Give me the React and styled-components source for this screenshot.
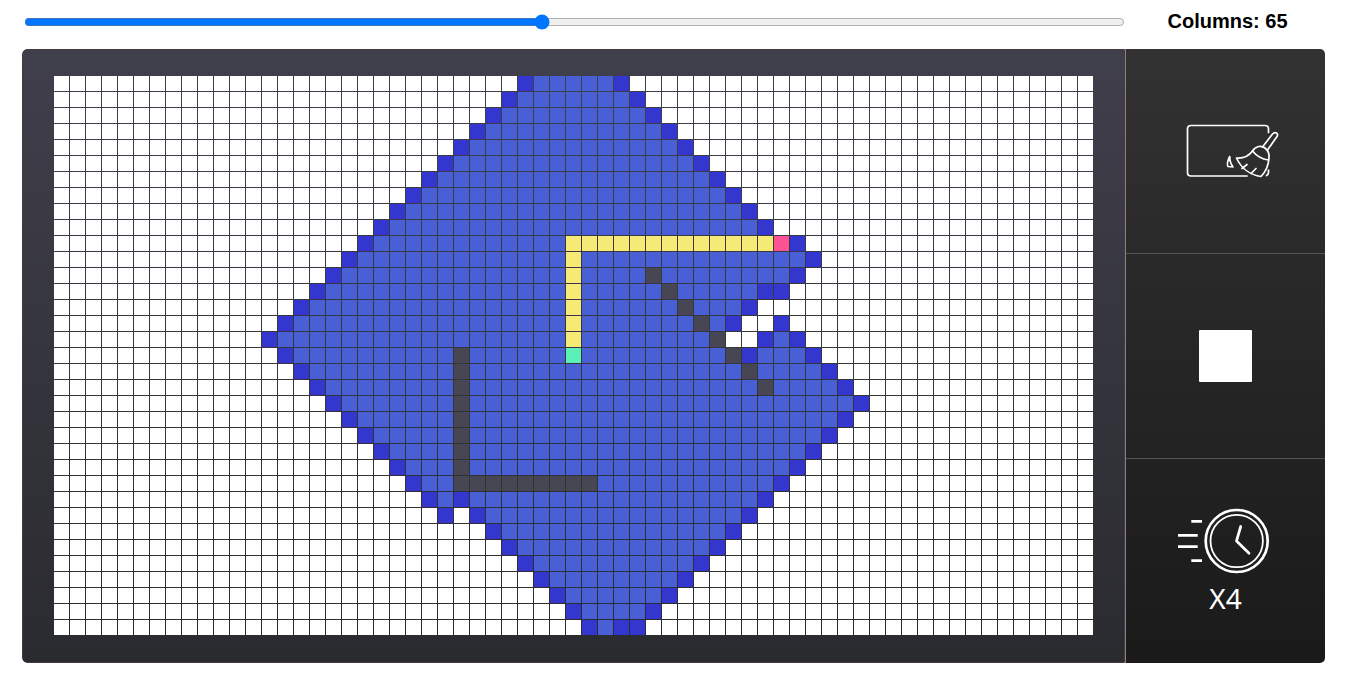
import React, { useState } from "react";
import styled, { createGlobalStyle } from "styled-components";

const GlobalStyle = createGlobalStyle`
  *, *::before, *::after { box-sizing: border-box; }
  body { margin: 0; background: #fff; font-family: "Liberation Sans", Arial, sans-serif; }
`;

const COLORS = {
  empty: "#ffffff",
  visited: "#485fd6",
  frontier: "#3336cf",
  wall: "#474754",
  path: "#f6ea76",
  start: "#5bf0b5",
  goal: "#fd5395",
};

const COLUMNS = 65;
const ROWS = 35;

const Page = styled.main`
  display: flex;
  flex-direction: column;
  padding: 0 22px 14px;
`;

const TopBar = styled.header`
  display: flex;
  align-items: center;
  height: 49px;
  padding: 0 0 5px 2px;
`;

const Slider = styled.input`
  flex: 1;
  min-width: 0;
  height: 16px;
  margin: 0;
`;

const SliderLabel = styled.label`
  width: 200px;
  padding: 0 0 2px 5px;
  text-align: center;
  font-size: 20px;
  line-height: 24px;
  font-weight: 700;
  color: #000;
`;

const Shell = styled.section`
  display: flex;
  border-radius: 5px;
  overflow: hidden;
`;

const BoardPanel = styled.div`
  flex: 1;
  min-width: 0;
  padding: 26px 31px 27px;
  border: 1px solid #4b3540;
  border-radius: 5px 0 0 5px;
  background: linear-gradient(#403f4c, #2a2b2f);
`;

const Board = styled.div`
  display: grid;
  grid-template-columns: repeat(${COLUMNS}, minmax(0, 1fr));
  gap: 1px;
`;

const Cell = styled.div`
  aspect-ratio: 1;
  background: ${(p) => COLORS[p.$kind]};
`;

const Sidebar = styled.aside`
  display: flex;
  flex-direction: column;
  width: 200px;
  border-left: 1px solid #8b8084;
  background: linear-gradient(#323233, #1a1a1b);
`;

const Tool = styled.button`
  flex: 1;
  display: flex;
  flex-direction: column;
  align-items: center;
  justify-content: center;
  gap: 6px;
  padding: 0;
  border: 0;
  border-bottom: 1px solid #545455;
  background: transparent;
  color: #fff;
  cursor: pointer;

  &:last-child { border-bottom: 0; }
`;

const StopSquare = styled.span`
  width: 53px;
  height: 52px;
  background: #fff;
  border-radius: 1px;
`;

const SpeedText = styled.span`
  font-family: "Noto Sans", "Open Sans", sans-serif;
  font-size: 28px;
  line-height: 36px;
`;

const Icon = styled.svg`
  display: block;
  fill: none;
  stroke: #fff;
  stroke-linecap: round;
  stroke-linejoin: round;
`;

/* First and last reached column of every row. */
function extent(row) {
  const left = row <= 16 ? 29 - row : row <= 27 ? row - 3 : row - 1;
  let right;
  if (row <= 9) right = 35 + row;
  else if (row <= 11) right = 36 + row;
  else if (row === 12) right = 46;
  else if (row === 13) right = 45;
  else if (row === 14) right = 43;
  else if (row <= 20) right = 30 + row;
  else right = 70 - row;
  return [left, right];
}

const EXTRA_FRONTIER = ["13,44", "15,42", "16,44", "17,43", "26,25", "27,26", "34,35"];
const UNREACHED = ["15,43", "15,44", "16,42", "16,43", "27,25"];

function kindOf(row, col) {
  const key = `${row},${col}`;
  if (key === "17,32") return "start";
  if (key === "10,45") return "goal";
  if (row === 10 && col >= 32 && col < 45) return "path";
  if (col === 32 && row > 10 && row < 17) return "path";
  if (col === 25 && row >= 17 && row <= 25) return "wall";
  if (row === 25 && col >= 25 && col <= 33) return "wall";
  if (row >= 12 && row <= 19 && col === row + 25) return "wall";
  const [left, right] = extent(row);
  if (col < left || col > right || UNREACHED.includes(key)) return "empty";
  if (col === left || col === right || EXTRA_FRONTIER.includes(key)) return "frontier";
  return "visited";
}

const CELLS = Array.from({ length: ROWS * COLUMNS }, (_, i) =>
  kindOf(Math.floor(i / COLUMNS), i % COLUMNS)
);

function ClearIcon() {
  return (
    <Icon width="107" height="54" viewBox="-15 -1 107 54" strokeWidth="1.7" aria-hidden="true">
      <path d="M81.500 7.500V4q0-3.500-3.500-3.500H4Q.5.5.5 4v43.500Q.5 51 4 51h56" />
      <path d="M81.500 45v2.500q0 2-2 3" />
      <path d="M75.500 22 85.500 9c2.500-3 6.500-.5 4.500 2.500L80.500 25" />
      <path d="M65.500 26c3-5 9-6 12.500-3 3 2.500 4.500 6 4 10-.5 7-3.500 14-8 18.500C63 50 54 43 49.500 33c7 .5 12-1.500 16-7z" />
      <path d="M65.500 26c4 5 9 8 16 9M55 43.500l5-4M64 48.500l5-5" />
      <path d="M42.700 31.500c-2 4-3.200 7.500-1.700 10l5 .5c-2.300-3-3.300-6-3.300-10.500z" />
    </Icon>
  );
}

function SpeedIcon() {
  return (
    <Icon width="95" height="68" viewBox="0 -2 95 68" strokeWidth="2.700" aria-hidden="true">
      <circle cx="58.700" cy="33" r="31" />
      <circle cx="58.700" cy="33" r="26.200" strokeWidth="1.800" />
      <path d="M62.700 18.500 58.500 33l12.500 12.300" />
      <path strokeLinecap="butt" d="M13.300 13.300H24M0 27.300h19.700M0 38.700h19.700M13.300 52.700H24" />
    </Icon>
  );
}

export default function App() {
  const [columns, setColumns] = useState(65);
  return (
    <Page>
      <GlobalStyle />
      <TopBar>
        <Slider
          id="columns"
          type="range"
          min="18"
          max="118"
          value={columns}
          onChange={(e) => setColumns(Number(e.target.value))}
        />
        <SliderLabel htmlFor="columns">Columns: {columns}</SliderLabel>
      </TopBar>
      <Shell>
        <BoardPanel>
          <Board>
            {CELLS.map((kind, i) => (
              <Cell key={i} $kind={kind} />
            ))}
          </Board>
        </BoardPanel>
        <Sidebar>
          <Tool type="button" aria-label="Clear board">
            <ClearIcon />
          </Tool>
          <Tool type="button" aria-label="Stop">
            <StopSquare />
          </Tool>
          <Tool type="button">
            <SpeedIcon />
            <SpeedText>X4</SpeedText>
          </Tool>
        </Sidebar>
      </Shell>
    </Page>
  );
}
